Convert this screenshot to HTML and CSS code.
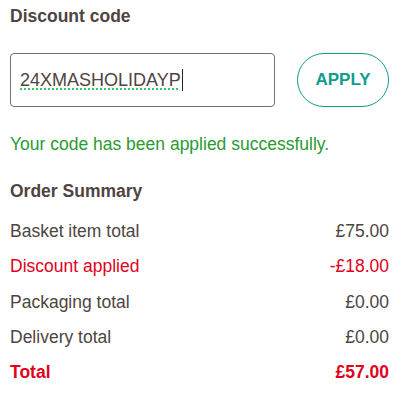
FILE: index.html
```html
<!DOCTYPE html>
<html>
<head>
<meta charset="utf-8">
<link rel="stylesheet" href="styles.css">
</head>
<body>
<div class="page">
  <h2 class="heading">Discount code</h2>
  <div class="code-row">
    <div class="code-input"><span class="code-text">24XMASHOLIDAYP</span><span class="caret"></span></div>
    <button class="apply">APPLY</button>
  </div>
  <p class="success">Your code has been applied successfully.</p>
  <h2 class="heading summary-title">Order Summary</h2>
  <div class="rows">
    <div class="row"><span>Basket item total</span><span>£75.00</span></div>
    <div class="row red"><span>Discount applied</span><span>-£18.00</span></div>
    <div class="row"><span>Packaging total</span><span>£0.00</span></div>
    <div class="row"><span>Delivery total</span><span>£0.00</span></div>
    <div class="row red bold"><span>Total</span><span>£57.00</span></div>
  </div>
</div>
</body>
</html>
```
FILE: styles.css
```css
html, body {
  margin: 0;
  padding: 0;
  background: #fff;
}
.page {
  font-family: "Liberation Sans", Arial, sans-serif;
  color: #4e4441;
  padding: 4px 13px 0 10px;
}
.heading {
  margin: 0;
  font-size: 17.5px;
  font-weight: bold;
  line-height: 24px;
}
.code-row {
  display: flex;
  justify-content: space-between;
  align-items: center;
  margin-top: 25px;
}
.code-input {
  box-sizing: border-box;
  width: 265px;
  height: 54px;
  border: 1px solid #707070;
  border-radius: 4px;
  display: flex;
  align-items: center;
  padding-left: 9px;
  font-size: 18px;
  color: #4e4441;
}
.code-text {
  text-decoration: underline dotted #3cc36a;
  text-decoration-thickness: 2px;
  text-underline-offset: 3px;
}
.caret {
  width: 1px;
  height: 22px;
  background: #222;
  margin-left: 1px;
}
.apply {
  box-sizing: border-box;
  width: 92px;
  height: 54px;
  border: 1px solid #0f9d8e;
  border-radius: 27px;
  background: #fff;
  color: #0f9d8e;
  font-family: "Liberation Sans", Arial, sans-serif;
  font-weight: bold;
  font-size: 17px;
  padding: 0;
}
.success {
  margin: 25px 0 0;
  color: #2a9a32;
  font-size: 17.5px;
  line-height: 24px;
}
.summary-title {
  margin-top: 23px;
}
.rows {
  margin-top: 11px;
}
.row {
  display: flex;
  justify-content: space-between;
  height: 35.25px;
  line-height: 35px;
  font-size: 17.5px;
}
.red {
  color: #e0001b;
}
.bold {
  font-weight: bold;
}
```
